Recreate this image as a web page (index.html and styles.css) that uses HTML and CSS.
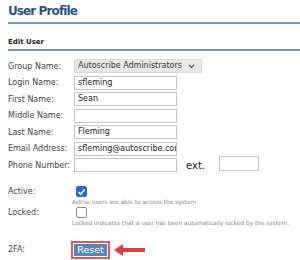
FILE: index.html
```html
<!DOCTYPE html>
<html lang="en">
<head>
    <meta charset="UTF-8">
    <title>User Profile</title>
    <link rel="stylesheet" href="styles.css">
</head>
<body>
    <h1 class="page-title">User Profile</h1>
    <h2 class="section-title">Edit User</h2>

    <div class="form-grid">
        <label class="field-label">Group Name:</label>
        <div class="field">
            <div class="select-box">
                <span>Autoscribe Administrators</span>
                <svg class="chev" width="7" height="5" viewBox="0 0 7 5"><path d="M1 1 L3.5 3.5 L6 1" fill="none" stroke="#555" stroke-width="1.2"/></svg>
            </div>
        </div>

        <label class="field-label">Login Name:</label>
        <div class="field"><div class="text-box">sfleming</div></div>

        <label class="field-label">First Name:</label>
        <div class="field"><div class="text-box">Sean</div></div>

        <label class="field-label">Middle Name:</label>
        <div class="field"><div class="text-box"></div></div>

        <label class="field-label">Last Name:</label>
        <div class="field"><div class="text-box">Fleming</div></div>

        <label class="field-label">Email Address:</label>
        <div class="field"><div class="text-box">sfleming@autoscribe.com</div></div>

        <label class="field-label">Phone Number:</label>
        <div class="field">
            <div class="text-box"></div>
            <span class="ext-label">ext.</span>
            <div class="text-box ext-box"></div>
        </div>
    </div>

    <div class="flag-grid">
        <label class="field-label">Active:</label>
        <div class="field"><span class="check checked">
            <svg width="9" height="8" viewBox="0 0 9 8"><path d="M1.5 4.2 L3.6 6.2 L7.6 1.6" fill="none" stroke="#fff" stroke-width="1.6"/></svg>
        </span></div>
        <div></div>
        <div class="help">Active users are able to access the system</div>

        <label class="field-label">Locked:</label>
        <div class="field"><span class="check"></span></div>
        <div></div>
        <div class="help">Locked indicates that a user has been automatically locked by the system.</div>
    </div>

    <div class="twofa-row">
        <label class="field-label">2FA:</label>
        <div class="field">
            <span class="highlight"><button class="reset-btn">Reset</button></span>
            <svg class="arrow" width="34" height="14" viewBox="0 0 34 14">
                <path d="M1 7 L10 1 L10 5 L32 5 L32 9 L10 9 L10 13 Z" fill="#e8383f"/>
            </svg>
        </div>
    </div>
</body>
</html>
```

FILE: styles.css
```css
body {
    margin: 0;
    padding: 0 0 0 8px;
    font-family: "DejaVu Sans", Verdana, sans-serif;
    color: #3a3a3a;
    background: #fff;
}
.page-title {
    margin: 0;
    padding-top: 3px;
    height: 19px;
    line-height: 16px;
    font-size: 12px;
    letter-spacing: -0.9px;
    color: #24568f;
    border-bottom: 2px solid #7095bd;
}
.section-title {
    margin: 0;
    padding-top: 12px;
    line-height: 13px;
    font-size: 7px;
    color: #222;
    border-bottom: 2px solid #7095bd;
}
.form-grid {
    margin-top: 7px;
    display: grid;
    grid-template-columns: 65px 1fr;
    grid-auto-rows: 16.5px;
    align-items: center;
}
.field-label {
    font-size: 8px;
    color: #444;
}
.field {
    display: flex;
    align-items: center;
    padding-left: 1px;
}
.text-box {
    box-sizing: border-box;
    width: 103px;
    height: 14px;
    border: 1px solid #c4c4c4;
    font-size: 8px;
    line-height: 12px;
    padding-left: 3px;
    color: #222;
    white-space: nowrap;
    overflow: hidden;
}
.select-box {
    box-sizing: border-box;
    width: 128px;
    height: 14px;
    background: #e8e8e8;
    border: 1px solid #dcdcdc;
    font-size: 8px;
    line-height: 12px;
    padding: 0 6px 0 3px;
    display: flex;
    justify-content: space-between;
    align-items: center;
}
.ext-label {
    margin-left: 9px;
    font-size: 10px;
    color: #222;
}
.ext-box {
    width: 40px;
    height: 15px;
    margin-left: 14px;
    margin-top: -4px;
}
.flag-grid {
    margin-top: 12px;
    display: grid;
    grid-template-columns: 65px 1fr;
    grid-template-rows: 12px 9px 12px 9px;
    align-items: center;
}
.check {
    box-sizing: border-box;
    width: 11px;
    height: 11px;
    margin-left: 2px;
    border: 1px solid #8a8a8a;
    border-radius: 2px;
    display: flex;
    align-items: center;
    justify-content: center;
}
.check.checked {
    background: #1a6fdc;
    border-color: #1a6fdc;
}
.help {
    font-size: 5.8px;
    color: #8a8a8a;
    white-space: nowrap;
    margin-left: -1px;
}
.twofa-row {
    margin-top: 13px;
    display: grid;
    grid-template-columns: 65px 1fr;
    align-items: center;
}
.highlight {
    display: inline-block;
    border: 2px solid #e55656;
    padding: 1px;
    margin-left: -3px;
    line-height: 0;
}
.reset-btn {
    margin: 0;
    border: none;
    width: 33px;
    height: 12px;
    padding: 0;
    background: #5784bb;
    color: #fff;
    font-family: "DejaVu Sans", Verdana, sans-serif;
    font-size: 9.5px;
    line-height: 12px;
}
.arrow {
    margin-left: 3px;
}
```
